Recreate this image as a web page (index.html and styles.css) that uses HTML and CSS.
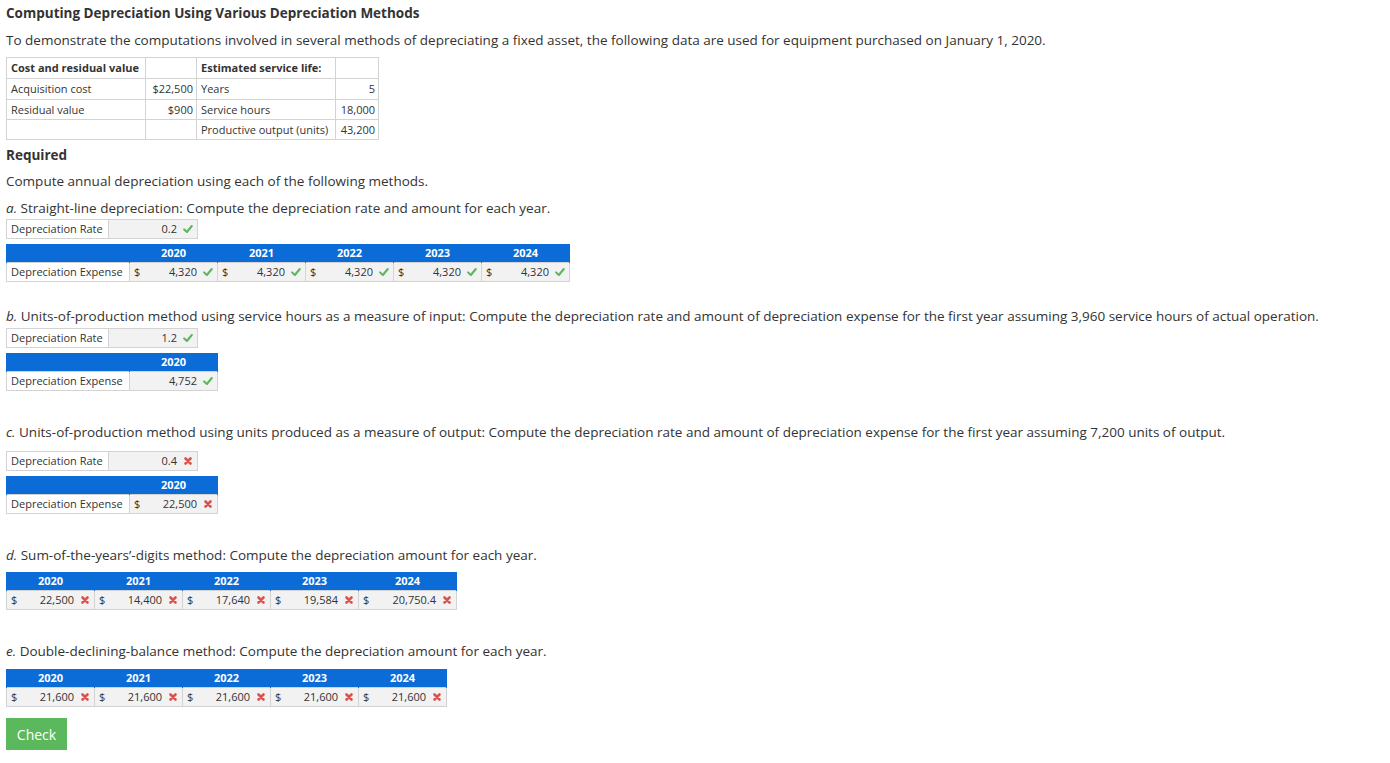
FILE: index.html
```html
<!DOCTYPE html>
<html>
<head>
<meta charset="utf-8">
<link rel="stylesheet" href="styles.css">
</head>
<body>
<div class="page">
  <h1 class="title">Computing Depreciation Using Various Depreciation Methods</h1>
  <p class="intro">To demonstrate the computations involved in several methods of depreciating a fixed asset, the following data are used for equipment purchased on January 1, 2020.</p>
  <table class="data">
    <colgroup><col class="c1"><col class="c2"><col class="c3"><col class="c4"></colgroup>
    <tr class="tall"><th>Cost and residual value</th><td></td><th>Estimated service life:</th><td></td></tr>
    <tr class="tall"><td>Acquisition cost</td><td class="r">$22,500</td><td>Years</td><td class="r">5</td></tr>
    <tr><td>Residual value</td><td class="r">$900</td><td>Service hours</td><td class="r">18,000</td></tr>
    <tr><td></td><td></td><td>Productive output (units)</td><td class="r">43,200</td></tr>
  </table>

  <h2 class="req">Required</h2>
  <p class="txt t-compute">Compute annual depreciation using each of the following methods.</p>

  <p class="txt t-a"><i>a.</i> Straight-line depreciation: Compute the depreciation rate and amount for each year.</p>
  <table class="rate">
    <colgroup><col class="rl"><col class="rv"></colgroup>
    <tr><td class="lab">Depreciation Rate</td><td class="val"><div class="in"><span class="num">0.2</span><svg class="ic" viewBox="0 0 10 10"><path d="M1.2 5.4 L3.9 8 L8.8 2" class="ok"/></svg></div></td></tr>
  </table>
  <table class="grid ga">
    <colgroup><col class="gl"><col class="gy"><col class="gy"><col class="gy"><col class="gy"><col class="gy"></colgroup>
    <tr class="head"><th></th><th>2020</th><th>2021</th><th>2022</th><th>2023</th><th>2024</th></tr>
    <tr>
      <td class="lab">Depreciation Expense</td>
      <td><div class="in"><span class="cur">$</span><span class="num">4,320</span><svg class="ic" viewBox="0 0 10 10"><path d="M1.2 5.4 L3.9 8 L8.8 2" class="ok"/></svg></div></td>
      <td><div class="in"><span class="cur">$</span><span class="num">4,320</span><svg class="ic" viewBox="0 0 10 10"><path d="M1.2 5.4 L3.9 8 L8.8 2" class="ok"/></svg></div></td>
      <td><div class="in"><span class="cur">$</span><span class="num">4,320</span><svg class="ic" viewBox="0 0 10 10"><path d="M1.2 5.4 L3.9 8 L8.8 2" class="ok"/></svg></div></td>
      <td><div class="in"><span class="cur">$</span><span class="num">4,320</span><svg class="ic" viewBox="0 0 10 10"><path d="M1.2 5.4 L3.9 8 L8.8 2" class="ok"/></svg></div></td>
      <td><div class="in"><span class="cur">$</span><span class="num">4,320</span><svg class="ic" viewBox="0 0 10 10"><path d="M1.2 5.4 L3.9 8 L8.8 2" class="ok"/></svg></div></td>
    </tr>
  </table>

  <p class="txt t-b"><i>b.</i> Units-of-production method using service hours as a measure of input: Compute the depreciation rate and amount of depreciation expense for the first year assuming 3,960 service hours of actual operation.</p>
  <table class="rate">
    <colgroup><col class="rl"><col class="rv"></colgroup>
    <tr><td class="lab">Depreciation Rate</td><td class="val"><div class="in"><span class="num">1.2</span><svg class="ic" viewBox="0 0 10 10"><path d="M1.2 5.4 L3.9 8 L8.8 2" class="ok"/></svg></div></td></tr>
  </table>
  <table class="grid gb">
    <colgroup><col class="gl"><col class="gy"></colgroup>
    <tr class="head"><th></th><th>2020</th></tr>
    <tr>
      <td class="lab">Depreciation Expense</td>
      <td><div class="in"><span class="num">4,752</span><svg class="ic" viewBox="0 0 10 10"><path d="M1.2 5.4 L3.9 8 L8.8 2" class="ok"/></svg></div></td>
    </tr>
  </table>

  <p class="txt t-c"><i>c.</i> Units-of-production method using units produced as a measure of output: Compute the depreciation rate and amount of depreciation expense for the first year assuming 7,200 units of output.</p>
  <table class="rate">
    <colgroup><col class="rl"><col class="rv"></colgroup>
    <tr><td class="lab">Depreciation Rate</td><td class="val"><div class="in"><span class="num">0.4</span><svg class="ic" viewBox="0 0 10 10"><path d="M2.5 2.5 L7.5 7.5 M7.5 2.5 L2.5 7.5" class="bad"/></svg></div></td></tr>
  </table>
  <table class="grid gb">
    <colgroup><col class="gl"><col class="gy"></colgroup>
    <tr class="head"><th></th><th>2020</th></tr>
    <tr>
      <td class="lab">Depreciation Expense</td>
      <td><div class="in"><span class="cur">$</span><span class="num">22,500</span><svg class="ic" viewBox="0 0 10 10"><path d="M2.5 2.5 L7.5 7.5 M7.5 2.5 L2.5 7.5" class="bad"/></svg></div></td>
    </tr>
  </table>

  <p class="txt t-d"><i>d.</i> Sum-of-the-years’-digits method: Compute the depreciation amount for each year.</p>
  <table class="grid gd">
    <colgroup><col class="gy"><col class="gy"><col class="gy"><col class="gy"><col class="gw"></colgroup>
    <tr class="head"><th>2020</th><th>2021</th><th>2022</th><th>2023</th><th>2024</th></tr>
    <tr>
      <td><div class="in"><span class="cur">$</span><span class="num">22,500</span><svg class="ic" viewBox="0 0 10 10"><path d="M2.5 2.5 L7.5 7.5 M7.5 2.5 L2.5 7.5" class="bad"/></svg></div></td>
      <td><div class="in"><span class="cur">$</span><span class="num">14,400</span><svg class="ic" viewBox="0 0 10 10"><path d="M2.5 2.5 L7.5 7.5 M7.5 2.5 L2.5 7.5" class="bad"/></svg></div></td>
      <td><div class="in"><span class="cur">$</span><span class="num">17,640</span><svg class="ic" viewBox="0 0 10 10"><path d="M2.5 2.5 L7.5 7.5 M7.5 2.5 L2.5 7.5" class="bad"/></svg></div></td>
      <td><div class="in"><span class="cur">$</span><span class="num">19,584</span><svg class="ic" viewBox="0 0 10 10"><path d="M2.5 2.5 L7.5 7.5 M7.5 2.5 L2.5 7.5" class="bad"/></svg></div></td>
      <td><div class="in"><span class="cur">$</span><span class="num">20,750.4</span><svg class="ic" viewBox="0 0 10 10"><path d="M2.5 2.5 L7.5 7.5 M7.5 2.5 L2.5 7.5" class="bad"/></svg></div></td>
    </tr>
  </table>

  <p class="txt t-e"><i>e.</i> Double-declining-balance method: Compute the depreciation amount for each year.</p>
  <table class="grid ge">
    <colgroup><col class="gy"><col class="gy"><col class="gy"><col class="gy"><col class="gy"></colgroup>
    <tr class="head"><th>2020</th><th>2021</th><th>2022</th><th>2023</th><th>2024</th></tr>
    <tr>
      <td><div class="in"><span class="cur">$</span><span class="num">21,600</span><svg class="ic" viewBox="0 0 10 10"><path d="M2.5 2.5 L7.5 7.5 M7.5 2.5 L2.5 7.5" class="bad"/></svg></div></td>
      <td><div class="in"><span class="cur">$</span><span class="num">21,600</span><svg class="ic" viewBox="0 0 10 10"><path d="M2.5 2.5 L7.5 7.5 M7.5 2.5 L2.5 7.5" class="bad"/></svg></div></td>
      <td><div class="in"><span class="cur">$</span><span class="num">21,600</span><svg class="ic" viewBox="0 0 10 10"><path d="M2.5 2.5 L7.5 7.5 M7.5 2.5 L2.5 7.5" class="bad"/></svg></div></td>
      <td><div class="in"><span class="cur">$</span><span class="num">21,600</span><svg class="ic" viewBox="0 0 10 10"><path d="M2.5 2.5 L7.5 7.5 M7.5 2.5 L2.5 7.5" class="bad"/></svg></div></td>
      <td><div class="in"><span class="cur">$</span><span class="num">21,600</span><svg class="ic" viewBox="0 0 10 10"><path d="M2.5 2.5 L7.5 7.5 M7.5 2.5 L2.5 7.5" class="bad"/></svg></div></td>
    </tr>
  </table>

  <button class="check">Check</button>
</div>
</body>
</html>
```

FILE: styles.css
```css
html, body { margin: 0; padding: 0; background: #fff; }
.page {
  padding: 3px 6px;
  font-family: "Open Sans", "DejaVu Sans", sans-serif;
  color: #333;
  font-size: 13.5px;
  line-height: 20px;
}
.title { margin: 0; font-size: 13.5px; font-weight: 700; line-height: 20px; color: #333; }
.intro { margin: 7px 0 0; }
.txt { margin: 0; }
.txt i { font-style: italic; }

table { border-collapse: collapse; table-layout: fixed; font-size: 11px; line-height: 16px; }
td, th { padding: 0; }

.data { margin-top: 7px; width: 373px; }
.data .c1 { width: 139px; }
.data .c2 { width: 51px; }
.data .c3 { width: 139px; }
.data .c4 { width: 43px; }
.data td, .data th {
  border: 1px solid #d3d3d3;
  height: 19px;
  padding: 0 4px;
  text-align: left;
  white-space: nowrap;
}
.data tr.tall td, .data tr.tall th { height: 20px; }
.data th { font-weight: 700; }
.data td.r { text-align: right; padding-right: 3px; }

.req { margin: 5px 0 0; font-size: 13.5px; font-weight: 700; line-height: 20px; }
.t-compute { margin-top: 6px; }
.t-a { margin-top: 7px; }
.t-b { margin-top: 24px; }
.t-c { margin-top: 31px; }
.t-d { margin-top: 31px; }
.t-e { margin-top: 31px; }

.rate { width: 191px; margin-top: 1px; }
.t-c + .rate { margin-top: 9px; }
.t-b + .rate { margin-top: 2px; }
.rate .rl { width: 102px; }
.rate .rv { width: 89px; }
.rate td { border: 1px solid #d3d3d3; height: 18px; }
.rate td.lab { padding: 0 4px; white-space: nowrap; background: #fff; }
.rate td.val { background: #f2f2f2; }

.in { display: flex; align-items: center; padding: 0 4px 0 4px; height: 18px; }
.num { margin-left: auto; }
.ic { width: 10px; height: 10px; margin-left: 6px; flex: none; }
.ok { fill: none; stroke: #5cb85c; stroke-width: 2.1; stroke-linecap: round; stroke-linejoin: round; }
.bad { fill: none; stroke: #d9534f; stroke-width: 2.6; stroke-linecap: round; }

.grid { margin-top: 5px; }
.t-d + .grid { margin-top: 7px; }
.t-e + .grid { margin-top: 8px; }
.grid .gl { width: 123px; }
.grid .gy { width: 88px; }
.grid .gw { width: 98px; }
.grid .head th {
  background: #0b6bd7;
  color: #fff;
  font-weight: 700;
  height: 18px;
  text-align: center;
  border: 0;
  border-left: 1px solid #0b6bd7;
  border-right: 1px solid #0b6bd7;
}
.grid td {
  border: 1px solid #d3d3d3;
  height: 18px;
  background: #f2f2f2;
}
.grid td.lab {
  background: #fff;
  padding: 0 4px;
  white-space: nowrap;
}
.ga { width: 563px; }
.gb { width: 211px; }
.gd { width: 450px; }
.ge { width: 440px; }

.check {
  display: block;
  margin-top: 11px;
  width: 61px;
  height: 32px;
  padding: 0;
  border: 0;
  background: #5cb85c;
  color: #fff;
  font-family: "Open Sans", "DejaVu Sans", sans-serif;
  font-size: 14px;
}
```
